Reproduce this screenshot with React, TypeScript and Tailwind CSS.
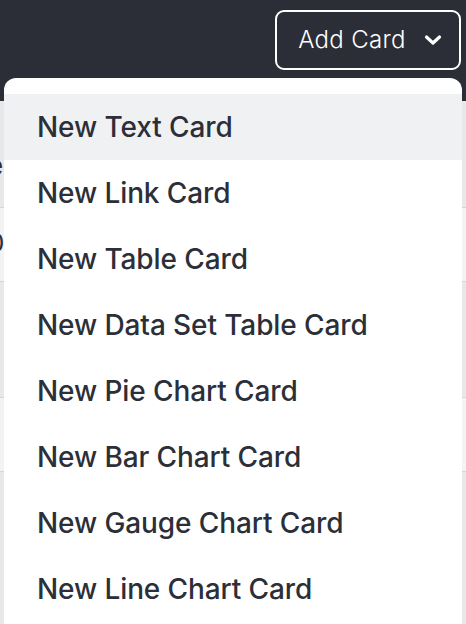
import React from 'react';

const items = [
  'New Text Card',
  'New Link Card',
  'New Table Card',
  'New Data Set Table Card',
  'New Pie Chart Card',
  'New Bar Chart Card',
  'New Gauge Chart Card',
  'New Line Chart Card',
];

const rows = [
  { h: 'h-[107px]', bg: 'bg-[#e8e8ea]', text: 'e', y: 'pt-[52px]' },
  { h: 'h-[74px]', bg: 'bg-[#f3f3f4]', text: '0', y: 'pt-[22px]' },
  { h: 'h-[116px]', bg: 'bg-[#e8e8ea]', text: '', y: '' },
  { h: 'h-[74px]', bg: 'bg-[#f3f3f4]', text: '', y: '' },
  { h: 'h-[160px]', bg: 'bg-[#e8e8ea]', text: '', y: '' },
];

export default function App() {
  return (
    <div className="relative w-[466px] h-[624px] overflow-hidden bg-[#e8e8ea] font-['Inter',sans-serif]">
      {/* Header */}
      <div className="h-[101px] bg-[#2b2e37] flex justify-end items-start pt-[10px] pr-[5px]">
        <button className="h-[60px] w-[186px] rounded-[9px] border-2 border-white flex items-center justify-center gap-[18px] pl-[4px] text-white text-[24px] font-light tracking-[0.3px]">
          <span>Add Card</span>
          <svg width="18" height="12" viewBox="0 0 18 12" fill="none">
            <path d="M2.5 3l6.5 6 6.5-6" stroke="white" strokeWidth="3.2" strokeLinecap="round" strokeLinejoin="round" />
          </svg>
        </button>
      </div>

      {/* Table behind */}
      <div className="flex flex-col">
        {rows.map((r, i) => (
          <div key={i} className={`${r.h} ${r.bg} border-b border-[#d6d6d9] ${r.y} text-[26px] text-[#2c2f38] leading-none`}>
            {r.text && <span className="block -ml-[12px]">{r.text}</span>}
          </div>
        ))}
      </div>

      {/* Dropdown menu */}
      <div className="absolute left-[4px] right-[4px] top-[78px] bottom-0 bg-white rounded-t-[12px] pt-[16px]">
        {items.map((it, i) => (
          <div
            key={it}
            className={`h-[66px] flex items-center pl-[33px] text-[28px] font-medium text-[#2c2f38] tracking-[-0.1px] ${i === 0 ? 'bg-[#f0f1f3]' : ''}`}
          >
            {it}
          </div>
        ))}
      </div>
    </div>
  );
}
